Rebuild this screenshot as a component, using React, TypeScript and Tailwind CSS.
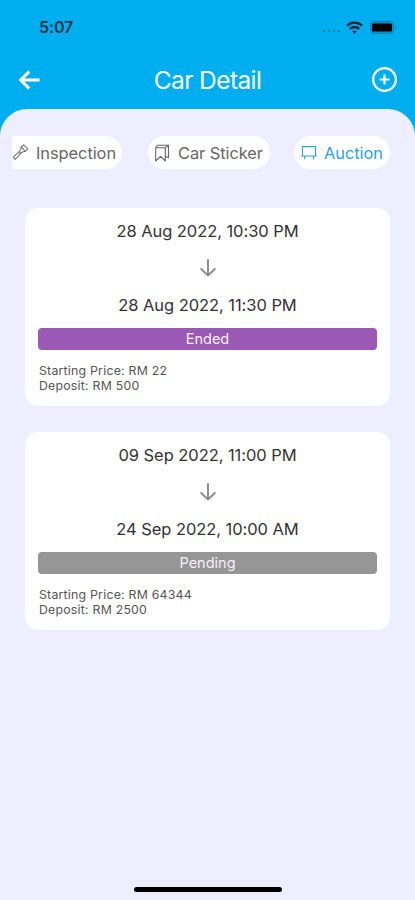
import { clsx } from "clsx";
import type { ReactNode } from "react";

type Auction = {
  start: string;
  end: string;
  status: "Ended" | "Pending";
  price: string;
  deposit: string;
};

const auctions: Auction[] = [
  { start: "28 Aug 2022, 10:30 PM", end: "28 Aug 2022, 11:30 PM", status: "Ended", price: "RM 22", deposit: "RM 500" },
  { start: "09 Sep 2022, 11:00 PM", end: "24 Sep 2022, 10:00 AM", status: "Pending", price: "RM 64344", deposit: "RM 2500" },
];

function StatusBar() {
  return (
    <div className="flex h-[54px] items-center justify-between pl-[39px] pr-[18px]">
      <span className="text-[16px] leading-5 font-semibold tracking-[-0.1px] text-[#06344a]">5:07</span>
      <div className="flex items-center">
        <svg width="20" height="12" viewBox="0 0 20 12" className="mr-[4px]" fill="#0788b8">
          <circle cx="2" cy="10" r="1.2" />
          <circle cx="7" cy="10" r="1.2" />
          <circle cx="12" cy="10" r="1.2" />
          <circle cx="17" cy="10" r="1.2" />
        </svg>
        <svg width="17" height="13" viewBox="0 0 17 13" fill="none" stroke="#032434" strokeWidth="2.4">
          <path d="M1 4.7a10.8 10.8 0 0 1 15 0" />
          <path d="M3.9 7.9a6.6 6.6 0 0 1 9.2 0" />
          <path d="M8.5 12.8 6.3 10.5a3.2 3.2 0 0 1 4.4 0z" fill="#032434" stroke="none" />
        </svg>
        <svg width="27" height="13" viewBox="0 0 27 13" className="ml-[7px]">
          <rect x="0.5" y="0.5" width="23" height="12" rx="3.5" fill="#0594c7" stroke="#0786b5" />
          <rect x="2" y="2.5" width="20" height="8" rx="1" fill="#000" />
          <path d="M25 4.5v4c.9-.4 1.4-1.1 1.4-2s-.5-1.6-1.4-2z" fill="#0786b5" />
        </svg>
      </div>
    </div>
  );
}

function Header() {
  return (
    <div className="flex h-[55px] items-center justify-between pl-[18px] pr-[17px] pb-[4px]">
      <svg width="22" height="20" viewBox="0 0 22 20" fill="none" stroke="#fff" strokeWidth="3" strokeLinejoin="round">
        <path d="M21.5 10H3M11.2 1.6 2.5 10l8.7 8.4" />
      </svg>
      <h1 className="ml-[4px] text-[24.5px] leading-8 tracking-[-0.6px] text-white">Car Detail</h1>
      <svg width="27" height="27" viewBox="0 0 27 27" fill="none" stroke="#fff" strokeWidth="2.2">
        <circle cx="13.5" cy="13.5" r="11.4" />
        <path d="M13.5 9.4v8.2M9.4 13.5h8.2" strokeLinecap="round" />
      </svg>
    </div>
  );
}

function Tab({ icon, label, className }: { icon: ReactNode; label: string; className: string }) {
  return (
    <button className={clsx("flex h-[33px] shrink-0 items-center bg-white text-[16.4px] tracking-[-0.05px] whitespace-nowrap", className)}>
      {icon}
      <span className="pt-[2px]">{label}</span>
    </button>
  );
}

function Tabs() {
  return (
    <div className="flex pt-[27px] pl-3">
      <Tab
        label="Inspection"
        className="w-[110px] gap-[7px] rounded-l-[4px] rounded-r-full text-[#666]"
        icon={
          <svg width="17" height="17" viewBox="0 0 17 17" fill="none" stroke="#777" strokeWidth="1.1" strokeLinejoin="round">
            <path d="m1.2 13.4 7.3-7.2.7-3.2L11.6.8l4.2 4-2.4 2.5-3.1.7-7.1 7.3z" />
            <path d="m9.2 3 4.2 4.300M7.200 9.500l1.400-1.400" />
          </svg>
        }
      />
      <Tab
        label="Car Sticker"
        className="ml-[26px] w-[122px] gap-[8px] rounded-full pl-[6px] text-[#666]"
        icon={
          <svg width="16" height="18" viewBox="0 0 16 18" fill="none" stroke="#666" strokeWidth="1.1" strokeLinejoin="round">
            <path d="M1.7 3.7h9.6V17l-4.8-4.600L1.700 17z" />
            <path d="M1.7 3.7 4 1.2h10.500v12.600l-3.200-1.600M11.300 3.700l3.200-2.500" />
          </svg>
        }
      />
      <Tab
        label="Auction"
        className="ml-6 w-[96px] gap-[7px] rounded-full pl-[7px] text-[#2e9fe0]"
        icon={
          <svg width="16" height="16" viewBox="0 0 16 16" fill="none" stroke="#2e9fe0" strokeWidth="1.1">
            <path d="M1.5 1.600h13v9.400h-13zM0 11h16M3.500 11v3.200M12.500 11v3.200" />
          </svg>
        }
      />
    </div>
  );
}

function AuctionCard({ auction }: { auction: Auction }) {
  return (
    <div className="h-[198px] rounded-[13px] bg-white px-[13px] pt-3">
      <p className="text-center text-[16.5px] leading-[22px] tracking-[-0.06px] text-[#333]">{auction.start}</p>
      <div className="flex h-[52px] items-center justify-center">
        <svg width="16" height="18" viewBox="0 0 16 18" fill="none" stroke="#8b8b8b" strokeWidth="1.9" strokeLinejoin="round" strokeLinecap="round">
          <path d="M8 1v15.500M1.200 10 8 16.500l6.800-6.500" />
        </svg>
      </div>
      <p className="text-center text-[16.5px] leading-[22px] tracking-[-0.06px] text-[#333]">{auction.end}</p>
      <div
        className={clsx(
          "mt-3 h-[22px] rounded-[4px] text-center text-[14.5px] leading-[22px] text-[#f7f0fa]",
          auction.status === "Ended" ? "bg-[#9b59b6]" : "bg-[#969696]"
        )}
      >
        {auction.status}
      </div>
      <div className="mt-[13px] pl-px text-[12.3px] leading-[15px] tracking-[0.23px] text-[#555]">
        <p>Starting Price: {auction.price}</p>
        <p>Deposit: {auction.deposit}</p>
      </div>
    </div>
  );
}

export default function App() {
  return (
    <div className="flex h-[900px] w-[415px] flex-col overflow-hidden bg-[#00aeef] font-['Inter',sans-serif]">
      <StatusBar />
      <Header />
      <main className="flex flex-1 flex-col rounded-t-[27px] bg-[#edeeff]">
        <Tabs />
        <div className="mt-[39px] flex flex-col gap-[26px] px-[25px]">
          {auctions.map((auction) => (
            <AuctionCard key={auction.start} auction={auction} />
          ))}
        </div>
        {/* Home indicator */}
        <div className="mx-auto mt-auto mb-[8px] h-[5px] w-[148px] rounded-full bg-black" />
      </main>
    </div>
  );
}
